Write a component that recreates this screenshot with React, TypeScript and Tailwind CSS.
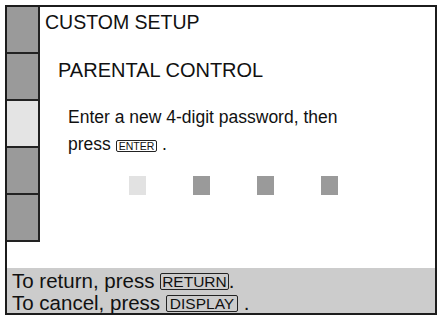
import React from 'react';

// Small rectangular key label, like the button legends printed in the manual
function Key({ label, className }: { label: string; className: string }) {
  return (
    <span className={`inline-block border border-[#222] rounded-[2px] ${className}`}>
      {label}
    </span>
  );
}

const sideRows = ['dark', 'dark', 'light', 'dark', 'dark'];
const digits = [true, false, false, false];

export default function App() {
  return (
    <div
      className="w-[437px] h-[318px] bg-white text-[#111] pl-[5px] pt-[5px]"
      style={{ fontFamily: '"Liberation Sans", Arial, sans-serif' }}
    >
      <div className="w-[432px] h-[310px] border-2 border-[#1c1c1c] flex flex-col">
        {/* Main menu area */}
        <div className="flex flex-1">
          <div className="w-[33px] shrink-0 self-start border-r-2 border-[#222]">
            {sideRows.map((tone, i) => (
              <div
                key={i}
                className={`h-[47px] border-b-2 border-[#222] ${
                  tone === 'light' ? 'bg-[#e4e4e4]' : 'bg-[#9a9a9a]'
                }`}
              />
            ))}
          </div>

          <div className="flex-1">
            <div className="mt-[5.5px] pl-[5px] text-[19.5px] leading-none">CUSTOM SETUP</div>
            <div className="mt-[28.4px] pl-[18px] text-[20px] leading-none">PARENTAL CONTROL</div>
            <div className="mt-[24px] pl-[28px] text-[17.5px] leading-[26.5px]">
              <div>Enter a new 4-digit password, then</div>
              <div>
                press <Key label="ENTER" className="text-[10.5px] leading-none px-[2px]" /> .
              </div>
            </div>
            <div className="mt-[18.6px] ml-[89px] flex gap-[47px]">
              {digits.map((active, i) => (
                <div
                  key={i}
                  className={`w-[17px] h-[19px] ${active ? 'bg-[#e2e2e2]' : 'bg-[#9a9a9a]'}`}
                />
              ))}
            </div>
          </div>
        </div>

        {/* Footer hints */}
        <div className="h-[45px] bg-[#cccccc] pl-[5px] pt-[2px] text-[20.5px] leading-[22px]">
          <div>
            To return, press{' '}
            <Key label="RETURN" className="text-[15.5px] leading-[15px] px-[1px] align-[1.5px]" />.
          </div>
          <div>
            To cancel, press{' '}
            <Key label="DISPLAY" className="text-[15.5px] leading-[15px] px-[3px] align-[1.5px]" /> .
          </div>
        </div>
      </div>
    </div>
  );
}
